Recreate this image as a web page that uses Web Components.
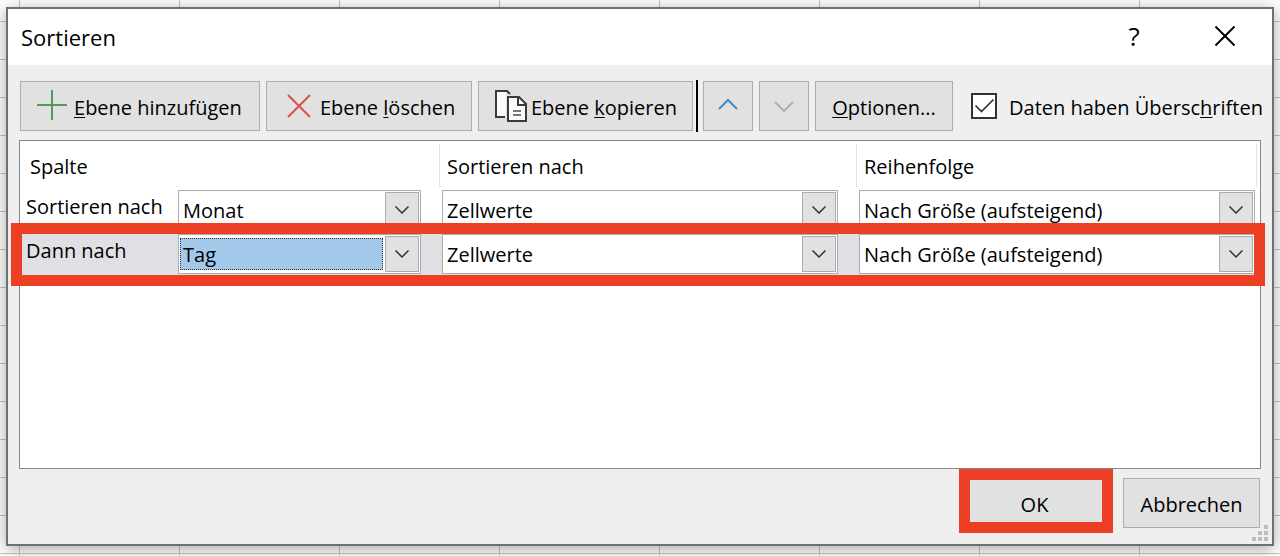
<!DOCTYPE html>
<html lang="de">
<head>
<meta charset="utf-8">
<title>Sortieren</title>
<style>
  body { margin: 0; font-family: "Open Sans", "Noto Sans", sans-serif; font-size: 20px; line-height: 28px; color: #000; }
</style>
</head>
<body>
<sheet-backdrop>
  <sort-dialog></sort-dialog>
</sheet-backdrop>
<script>
  function define(name, html) {
    const template = document.createElement('template');
    template.innerHTML = html;
    customElements.define(name, class extends HTMLElement {
      constructor() {
        super();
        this.attachShadow({ mode: 'open' }).append(template.content.cloneNode(true));
      }
    });
  }

  // Spreadsheet grid behind the dialog
  define('sheet-backdrop', `
    <style>
      :host {
        display: flex; flex-direction: column; box-sizing: border-box;
        min-height: 100vh; padding: 7px 6px 10px; overflow: hidden;
        background:
          repeating-linear-gradient(to right, transparent 0 19px, #c6c6c6 19px 20px, transparent 20px 160px),
          repeating-linear-gradient(to bottom, transparent 0 21px, #c6c6c6 21px 22px, transparent 22px 38px),
          #fff;
      }
    </style>
    <slot></slot>`);

  define('tool-button', `
    <style>
      :host { display: flex; flex: none; height: 50px; }
      button {
        flex: 1; display: flex; align-items: center; justify-content: var(--align, center);
        gap: var(--gap, 0); padding: var(--pad, 0); margin: 0;
        border: 1px solid #adadad; border-radius: 0; background: #e1e1e1;
        font: inherit; color: #000; white-space: nowrap;
      }
      .label { padding-top: 3px; }
    </style>
    <button type="button"><slot name="icon"></slot><span class="label"><slot></slot></span></button>`);

  define('icon-button', `
    <style>
      :host { display: flex; flex: none; width: 50px; height: 50px; }
      button {
        flex: 1; display: flex; align-items: center; justify-content: center; padding: 0; margin: 0;
        border: 1px solid #adadad; border-radius: 0; background: #e1e1e1;
      }
    </style>
    <button type="button"><slot></slot></button>`);

  define('title-bar', `
    <style>
      :host { display: flex; align-items: center; height: 56px; padding: 0 32px 0 13px; background: #fff; }
      h1 { flex: 1; margin: 0; font-size: 22px; font-weight: 400; }
      button { display: flex; align-items: center; justify-content: center; width: 30px; height: 40px; padding: 0 0 2px; border: 0; background: none; font: inherit; font-size: 26px; color: #000; }
      .tools { display: flex; gap: 61px; }
      svg { display: block; }
    </style>
    <h1><slot></slot></h1>
    <div class="tools">
      <button type="button" aria-label="Hilfe">?</button>
      <button type="button" aria-label="Schließen"><svg width="22" height="22" viewBox="0 0 22 22" fill="none" stroke="#000" stroke-width="2"><path d="M1.500 1.500 20.500 20.500M20.500 1.500 1.500 20.500"/></svg></button>
    </div>`);

  define('header-check', `
    <style>
      :host { display: block; flex: none; }
      label { display: flex; align-items: center; gap: 12px; white-space: nowrap; }
      .box { display: grid; width: 26px; height: 26px; }
      input { grid-area: 1 / 1; appearance: none; width: 26px; height: 26px; margin: 0; border: 2px solid #333; border-radius: 0; background: #fff; }
      svg { grid-area: 1 / 1; pointer-events: none; visibility: hidden; z-index: 1; }
      input:checked + svg { visibility: visible; }
      .text { padding-top: 3px; }
    </style>
    <label><span class="box"><input type="checkbox" checked><svg width="26" height="26" viewBox="0 0 26 26" fill="none" stroke="#333" stroke-width="1.700"><path d="M4.500 12.500 10.500 18.500 22.500 6.500"/></svg></span><span class="text"><slot></slot></span></label>`);

  define('sort-toolbar', `
    <style>
      :host { display: flex; align-items: center; gap: 6px; padding: 16px 12px 9px; }
      .add { width: 240px; --align: flex-start; --pad: 0 0 0 16px; --gap: 7px; }
      .delete { width: 206px; --align: flex-start; --pad: 0 0 0 20px; --gap: 9px; }
      .copy { width: 215px; --align: flex-start; --pad: 0 0 0 16px; --gap: 4px; }
      .options { width: 138px; }
      .rule { flex: none; width: 2px; height: 52px; margin: -1px -1px -1px -3px; background: #000; }
      header-check { margin-left: 12px; }
      svg { display: block; flex: none; }
      u { text-underline-offset: 2px; text-decoration-thickness: 1px; text-decoration-skip-ink: none; }
    </style>
    <tool-button class="add"><svg slot="icon" width="30" height="32" viewBox="0 0 30 32" fill="none" stroke="#519c59" stroke-width="2"><path d="M0 15H30M15 0V30"/></svg><u>E</u>bene hinzufügen</tool-button>
    <tool-button class="delete"><svg slot="icon" width="24" height="24" viewBox="0 0 24 24" fill="none" stroke="#db5049" stroke-width="2"><path d="M1 1 23 23M23 1 1 23"/></svg>Ebene <u>l</u>öschen</tool-button>
    <tool-button class="copy"><svg slot="icon" width="32" height="32" viewBox="0 0 32 32" fill="none" stroke="#3a3a3a" stroke-width="2"><path d="M1 1H11V27H1Z" fill="#fafafa" stroke="none"/><path d="M10 27H1V1H12L15 4"/><path d="M13 7H24L31 14V31H13Z" fill="#fafafa"/><path d="M23 7V15H31"/><path d="M18 21H26M18 25H26" stroke="#777"/></svg>Ebene <u>k</u>opieren</tool-button>
    <span class="rule"></span>
    <icon-button><svg role="img" aria-label="Nach oben" width="20" height="20" viewBox="0 0 20 20" fill="none" stroke="#3e8ccc" stroke-width="2"><path d="M1 13 10 4 19 13"/></svg></icon-button>
    <icon-button><svg role="img" aria-label="Nach unten" width="20" height="20" viewBox="0 0 20 20" fill="none" stroke="#b1b1b1" stroke-width="2"><path d="M1 6 10 15 19 6"/></svg></icon-button>
    <tool-button class="options"><u>O</u>ptionen...</tool-button>
    <header-check>Daten haben Übersc<u>h</u>riften</header-check>`);

  // Drop-down: value, accessible name and highlight come from attributes
  class ComboBox extends HTMLElement {
    constructor() {
      super();
      this.attachShadow({ mode: 'open' }).innerHTML = `
        <style>
          :host { display: grid; grid-template-columns: minmax(0, 1fr) 34px 1px; align-items: center; box-sizing: border-box; height: 40px; border: 1px solid #ababab; background: #fff; }
          select { grid-area: 1 / 1 / 2 / 4; appearance: none; width: 100%; height: 38px; margin: 0; padding: 2px 36px 0 4px; border: 0; border-radius: 0; outline: 0; background: none; font: inherit; color: #000; z-index: 1; }
          .field { grid-area: 1 / 1; height: 32px; margin: 0 2px 0 1px; box-sizing: border-box; }
          :host([selected]) .field { border: 1px dotted #333; background: #a2c9ea; }
          .arrow { grid-area: 1 / 2; box-sizing: border-box; height: 36px; border: 1px solid #adadad; background: #e1e1e1; display: grid; place-items: center; }
          svg { display: block; }
        </style>
        <span class="field"></span>
        <span class="arrow"><svg width="14" height="8" viewBox="0 0 14 8" fill="none" stroke="#333" stroke-width="1.500"><path d="M.5.5 7 7 13.500.5"/></svg></span>
        <select><option></option></select>`;
    }
    connectedCallback() {
      this.shadowRoot.querySelector('option').textContent = this.getAttribute('value');
      this.shadowRoot.querySelector('select').setAttribute('aria-label', this.getAttribute('label'));
    }
  }
  customElements.define('combo-box', ComboBox);

  define('sort-levels', `
    <style>
      :host { display: block; flex: 1; margin: 0 11px; border: 1px solid #828790; background: #fff; }
      table { width: 100%; table-layout: fixed; border-collapse: collapse; }
      .name { width: 158px; }
      .column { width: 264px; }
      .on { width: 417px; }
      td, th { padding: 0; font-weight: 400; text-align: left; vertical-align: top; }
      thead th { height: 47px; }
      thead div { height: 43px; margin: 3px 2px 0 -4px; padding-left: 9px; line-height: 46px; border-right: 1px solid #e2e2e2; }
      thead th:first-child div { margin-left: 0; padding-left: 10px; }
      thead th:last-child div { margin-right: 3px; }
      tbody th { height: 44px; padding-left: 6px; line-height: 38px; box-sizing: border-box; }
      td { padding: 2px 21px 0 0; }
      td:last-child { padding-right: 5px; }
      .current { position: relative; background: #e0dfe4; }
      .mark { position: absolute; inset: -9px -5px -10px -9px; border: 11px solid #ec3f24; pointer-events: none; z-index: 2; }
    </style>
    <table>
      <colgroup><col class="name"><col class="column"><col class="on"><col></colgroup>
      <thead>
        <tr><th colspan="2" scope="col"><div>Spalte</div></th><th scope="col"><div>Sortieren nach</div></th><th scope="col"><div>Reihenfolge</div></th></tr>
      </thead>
      <tbody>
        <tr>
          <th scope="row">Sortieren nach</th>
          <td><combo-box label="Spalte" value="Monat"></combo-box></td>
          <td><combo-box label="Sortieren nach" value="Zellwerte"></combo-box></td>
          <td><combo-box label="Reihenfolge" value="Nach Größe (aufsteigend)"></combo-box></td>
        </tr>
        <tr class="current">
          <th scope="row">Dann nach<span class="mark"></span></th>
          <td><combo-box label="Spalte" value="Tag" selected></combo-box></td>
          <td><combo-box label="Sortieren nach" value="Zellwerte"></combo-box></td>
          <td><combo-box label="Reihenfolge" value="Nach Größe (aufsteigend)"></combo-box></td>
        </tr>
      </tbody>
    </table>`);

  define('dialog-footer', `
    <style>
      :host { display: flex; justify-content: flex-end; gap: 20px; padding: 9px 12px 16px; position: relative; }
      tool-button { width: 137px; }
      .ok { position: relative; }
      .mark { position: absolute; inset: -9px -10px -5px -7px; border: 11px solid #ec3f24; pointer-events: none; }
      .grip { position: absolute; right: 4px; bottom: 3px; }
    </style>
    <div class="ok"><tool-button>OK</tool-button><span class="mark"></span></div>
    <tool-button>Abbrechen</tool-button>
    <svg class="grip" width="16" height="16" viewBox="0 0 16 16" fill="#bdbdbd"><path d="M12 0h4v4h-4zM6 6h4v4H6zM12 6h4v4h-4zM0 12h4v4H0zM6 12h4v4H6zM12 12h4v4h-4z"/></svg>`);

  define('sort-dialog', `
    <style>
      :host { flex: 1; display: flex; flex-direction: column; border: 2px solid #707070; background: #efefef; box-shadow: 0 3px 16px rgba(0, 0, 0, .35); }
    </style>
    <title-bar>Sortieren</title-bar>
    <sort-toolbar></sort-toolbar>
    <sort-levels></sort-levels>
    <dialog-footer></dialog-footer>`);
</script>
</body>
</html>
